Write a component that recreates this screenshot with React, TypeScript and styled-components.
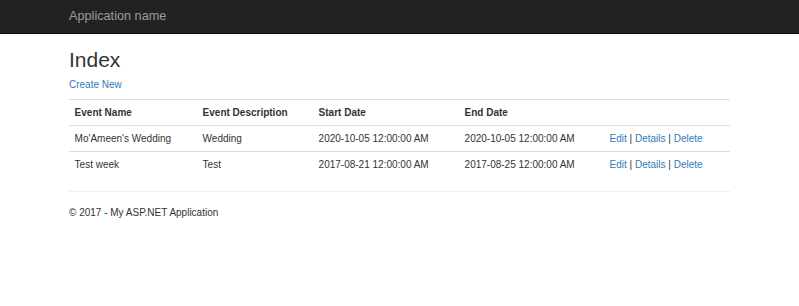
import React from "react";
import styled, { createGlobalStyle } from "styled-components";

const Global = createGlobalStyle`
  html, body { margin: 0; padding: 0; background: #fff; }
  body {
    font-family: "Liberation Sans", Arial, Helvetica, sans-serif;
    font-size: 10px;
    line-height: 14px;
    color: #333;
  }
  * { box-sizing: border-box; }
`;

const Navbar = styled.header`
  height: 34px;
  background: #222;
  border-bottom: 1px solid #080808;
`;

const Container = styled.div`
  width: 661px;
  margin: 0 auto;
`;

const Brand = styled.a`
  display: block;
  height: 33px;
  line-height: 33px;
  font-size: 12.7px;
  color: #9d9d9d;
  text-decoration: none;
`;

const Title = styled.h2`
  margin: 14px 0 7px;
  font-size: 21px;
  line-height: 23px;
  font-weight: 500;
  color: #333;
`;

const Para = styled.p`
  margin: 0 0 7px;
`;

const Link = styled.a`
  color: #337ab7;
  text-decoration: none;
`;

const Table = styled.table`
  width: 100%;
  border-collapse: collapse;
  border-spacing: 0;
  margin-bottom: 13px;
`;

const Th = styled.th<{ $w: number }>`
  width: ${(p) => p.$w}px;
  text-align: left;
  font-weight: bold;
  padding: 5.6px;
  line-height: 14px;
  border-top: 1px solid #ddd;
  border-bottom: 1px solid #ddd;
  vertical-align: bottom;
`;

const Td = styled.td`
  padding: 5.6px;
  line-height: 14px;
  border-top: 1px solid #ddd;
  vertical-align: top;
`;

const Rule = styled.hr`
  margin: 0 0 14px;
  border: 0;
  border-top: 1px solid #eee;
`;

const FooterText = styled.p`
  margin: 0 0 7px;
`;

const rows = [
  { name: "Mo'Ameen's Wedding", desc: "Wedding", start: "2020-10-05 12:00:00 AM", end: "2020-10-05 12:00:00 AM" },
  { name: "Test week", desc: "Test", start: "2017-08-21 12:00:00 AM", end: "2017-08-25 12:00:00 AM" },
];

export default function App() {
  return (
    <>
      <Global />
      <Navbar>
        <Container>
          <Brand href="#">Application name</Brand>
        </Container>
      </Navbar>
      <Container>
        <Title>Index</Title>
        <Para>
          <Link href="#">Create New</Link>
        </Para>
        <Table>
          <thead>
            <tr>
              <Th $w={128}>Event Name</Th>
              <Th $w={116}>Event Description</Th>
              <Th $w={146}>Start Date</Th>
              <Th $w={145}>End Date</Th>
              <Th $w={126}></Th>
            </tr>
          </thead>
          <tbody>
            {rows.map((r) => (
              <tr key={r.name}>
                <Td>{r.name}</Td>
                <Td>{r.desc}</Td>
                <Td>{r.start}</Td>
                <Td>{r.end}</Td>
                <Td>
                  <Link href="#">Edit</Link> | <Link href="#">Details</Link> |{" "}
                  <Link href="#">Delete</Link>
                </Td>
              </tr>
            ))}
          </tbody>
        </Table>
        <Rule />
        <FooterText>© 2017 - My ASP.NET Application</FooterText>
      </Container>
    </>
  );
}
